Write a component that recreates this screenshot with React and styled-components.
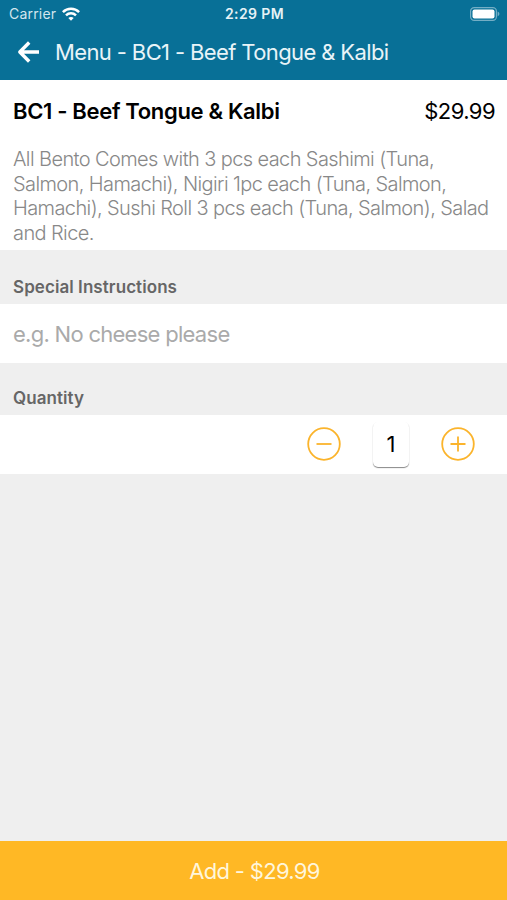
import { useState } from 'react';
import styled, { createGlobalStyle } from 'styled-components';

const GlobalStyle = createGlobalStyle`
  * {
    box-sizing: border-box;
  }

  body {
    margin: 0;
    background: #efefef;
  }
`;

const Screen = styled.div`
  display: flex;
  flex-direction: column;
  height: 100vh;
  overflow: hidden;
  background: #efefef;
  color: #000;
  font-family: Inter, 'Liberation Sans', sans-serif;
`;

const Header = styled.header`
  height: 80px;
  flex: none;
  background: #087097;
  color: #fff;
`;

const StatusBar = styled.div`
  display: grid;
  grid-template-columns: 1fr auto 1fr;
  align-items: center;
  height: 27px;
  padding: 0 7px 0 9px;
  font-size: 14px;
  line-height: 27px;
`;

const Carrier = styled.div`
  display: flex;
  align-items: center;
  gap: 6px;
  color: #d3e6ee;
  letter-spacing: 0.2px;
`;

const Time = styled.div`
  color: #e6f2f6;
  font-size: 14px;
  font-weight: 600;
  letter-spacing: 0.4px;
`;

const Battery = styled.svg`
  justify-self: end;
`;

const NavBar = styled.div`
  display: flex;
  align-items: center;
  height: 50px;
  padding-left: 17px;
`;

const BackButton = styled.button`
  display: flex;
  width: 38px;
  padding: 0;
  border: 0;
  background: transparent;
  color: #fff;
  cursor: pointer;
`;

const NavTitle = styled.h1`
  margin: 0;
  color: #e8f4f8;
  font-size: 22px;
  font-weight: 400;
  letter-spacing: -0.62px;
  white-space: nowrap;
`;

const Details = styled.section`
  flex: none;
  height: 170px;
  padding: 17px 12px 0 13px;
  background: #fff;
`;

const ItemRow = styled.div`
  display: flex;
  justify-content: space-between;
  height: 50px;
  font-size: 22px;
  line-height: 29px;
  white-space: nowrap;
`;

const ItemName = styled.h2`
  margin: 0;
  font-size: 22px;
  font-weight: 600;
  letter-spacing: -0.33px;
`;

const Price = styled.span`
  letter-spacing: -0.55px;
`;

const Description = styled.p`
  margin: 0;
  color: #888;
  font-size: 20px;
  font-weight: 300;
  line-height: 24.5px;
  letter-spacing: -0.6px;
  white-space: nowrap;
`;

const Label = styled.div`
  display: flex;
  align-items: flex-end;
  flex: none;
  height: ${props => props.$height}px;
  padding: 0 13px 6px;
  color: #666;
  font-size: 17px;
  font-weight: 600;
  line-height: 21px;
  letter-spacing: 0.07px;
`;

const Instructions = styled.input`
  flex: none;
  height: 59px;
  padding: 0 13px;
  border: 0;
  outline: none;
  background: #fff;
  font: 400 22px Inter, 'Liberation Sans', sans-serif;
  letter-spacing: -0.72px;

  &::placeholder {
    color: #aaa;
    opacity: 1;
  }
`;

const QuantityRow = styled.div`
  display: flex;
  align-items: center;
  justify-content: flex-end;
  flex: none;
  height: 59px;
  padding: 0 32px 1px 0;
  gap: 32px;
  background: #fff;
`;

const StepButton = styled.button`
  display: flex;
  padding: 0;
  border: 0;
  background: transparent;
  color: #fbb42c;
  cursor: pointer;
`;

const Amount = styled.div`
  width: 36px;
  height: 45px;
  border-radius: 5px;
  background: #fff;
  box-shadow: 0 1px 1px #888;
  font-size: 22px;
  line-height: 45px;
  text-align: center;
`;

const AddButton = styled.button`
  flex: none;
  height: 59px;
  margin-top: auto;
  padding: 0 0 0 2px;
  border: 0;
  background: #ffb825;
  color: #fff6dc;
  font: 400 22px Inter, 'Liberation Sans', sans-serif;
  letter-spacing: -0.7px;
  cursor: pointer;
`;

const WifiIcon = () => (
  <svg width="18" height="14" viewBox="0 0 18 14" fill="none" stroke="#fff" strokeWidth="2.5">
    <path d="M.9 5.1C5.4.7 12.6.7 17.1 5.1" />
    <path d="M4 8.3c2.8-2.7 7.2-2.7 10 0" />
    <path d="M9 13.8 6.3 11c1.5-1.4 3.9-1.4 5.4 0z" fill="#fff" stroke="none" />
  </svg>
);

const BackIcon = () => (
  <svg width="23" height="22" viewBox="0 0 23 22" fill="none" stroke="currentColor" strokeWidth="3.4" strokeLinejoin="round">
    <path d="M12.2 1.5 2.8 11l9.4 9.5M3 11h19" />
  </svg>
);

const StepIcon = ({ plus }) => (
  <svg width="34" height="34" viewBox="0 0 34 34" fill="none" stroke="currentColor" strokeWidth="1.8">
    <circle cx="17" cy="17" r="15.8" />
    <path d={plus ? 'M9.5 17h15M17 9.5v15' : 'M9.5 17h15'} />
  </svg>
);

const UNIT_PRICE = 29.99;

const App = () => {
  const [quantity, setQuantity] = useState(1);
  const [instructions, setInstructions] = useState('');

  return (
    <Screen>
      <GlobalStyle />
      <Header>
        <StatusBar>
          <Carrier>
            Carrier
            <WifiIcon />
          </Carrier>
          <Time>2:29 PM</Time>
          <Battery width="30" height="14" viewBox="0 0 30 14">
            <rect x=".6" y=".6" width="25.8" height="12.8" rx="3.6" fill="none" stroke="#74aec5" strokeWidth="1.2" />
            <rect x="2.5" y="2.5" width="22" height="9" rx="2" fill="#fff" />
            <path d="M27.6 4.6c2.4 1 2.4 3.8 0 4.8z" fill="#74aec5" />
          </Battery>
        </StatusBar>
        <NavBar>
          <BackButton aria-label="Back">
            <BackIcon />
          </BackButton>
          <NavTitle>Menu - BC1 - Beef Tongue &amp; Kalbi</NavTitle>
        </NavBar>
      </Header>

      <Details>
        <ItemRow>
          <ItemName>BC1 - Beef Tongue &amp; Kalbi</ItemName>
          <Price>$29.99</Price>
        </ItemRow>
        <Description>
          All Bento Comes with 3 pcs each Sashimi (Tuna,<br />
          Salmon, Hamachi), Nigiri 1pc each (Tuna, Salmon,<br />
          Hamachi), Sushi Roll 3 pcs each (Tuna, Salmon), Salad<br />
          and Rice.
        </Description>
      </Details>

      <Label $height={54}>Special Instructions</Label>
      <Instructions
        placeholder="e.g. No cheese please"
        value={instructions}
        onChange={event => setInstructions(event.target.value)}
      />

      <Label $height={52}>Quantity</Label>
      <QuantityRow>
        <StepButton aria-label="Decrease" onClick={() => setQuantity(Math.max(1, quantity - 1))}>
          <StepIcon />
        </StepButton>
        <Amount>{quantity}</Amount>
        <StepButton aria-label="Increase" onClick={() => setQuantity(quantity + 1)}>
          <StepIcon plus />
        </StepButton>
      </QuantityRow>

      <AddButton>Add - ${(UNIT_PRICE * quantity).toFixed(2)}</AddButton>
    </Screen>
  );
};

export default App;
